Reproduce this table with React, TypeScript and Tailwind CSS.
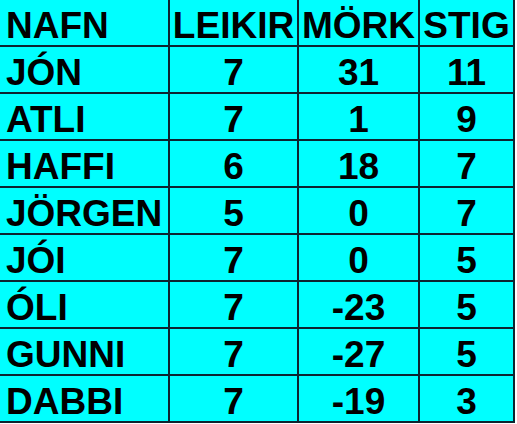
import { Fragment } from 'react'

const header = ['NAFN', 'LEIKIR', 'MÖRK', 'STIG']

const rows: [string, number, number, number][] = [
  ['JÓN', 7, 31, 11],
  ['ATLI', 7, 1, 9],
  ['HAFFI', 6, 18, 7],
  ['JÖRGEN', 5, 0, 7],
  ['JÓI', 7, 0, 5],
  ['ÓLI', 7, -23, 5],
  ['GUNNI', 7, -27, 5],
  ['DABBI', 7, -19, 3],
]

const cell = 'flex h-[47px] items-center border-r-2 border-b-2 border-[#0d2430] pt-[5px]'

export default function App() {
  return (
    <div className="h-[424px] w-[517px] bg-white">
      <div
        className="grid w-[515px] grid-cols-[170px_129px_121px_95px] bg-[#00ffff] text-[37px] font-bold leading-none text-black"
        style={{ fontFamily: '"Liberation Sans", Arial, sans-serif' }}
      >
        {header.map((h, i) => (
          <div key={h} className={`${cell} ${i === 0 ? 'justify-start pl-[6px]' : 'justify-center'}`}>
            {h}
          </div>
        ))}
        {rows.map((r) => (
          <Fragment key={r[0]}>
            <div className={`${cell} justify-start pl-[6px]`}>{r[0]}</div>
            <div className={`${cell} justify-center`}>{r[1]}</div>
            <div className={`${cell} justify-center`}>{r[2]}</div>
            <div className={`${cell} justify-center`}>{r[3]}</div>
          </Fragment>
        ))}
      </div>
    </div>
  )
}
